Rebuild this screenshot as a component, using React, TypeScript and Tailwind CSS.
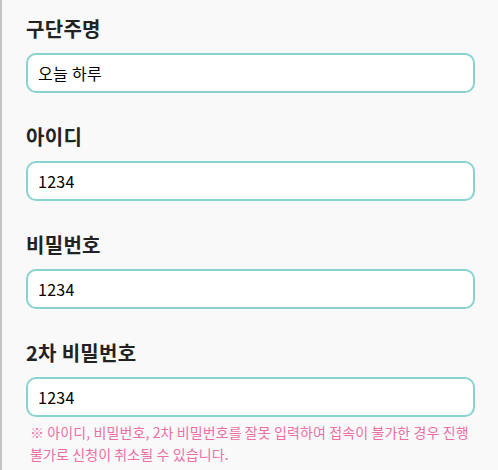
import React from 'react';

const FIELDS = [
  { label: '구단주명', value: '오늘 하루' },
  { label: '아이디', value: '1234' },
  { label: '비밀번호', value: '1234' },
  { label: '2차 비밀번호', value: '1234' },
];

export default function App() {
  return (
    <div
      className="min-h-[470px] w-[498px] bg-[#f9f9f9] border-l-2 border-[#c4c4c4] pl-[24px] pr-[23px] pt-[15px]"
      style={{ fontFamily: '"Noto Sans CJK KR", "Noto Sans", sans-serif' }}
    >
      {FIELDS.map((f, i) => (
        <div key={i} className={i === 0 ? '' : 'mt-[30px]'}>
          <h3 className="text-[20px] leading-[28px] font-bold text-[#222] tracking-[0.3px]">{f.label}</h3>
          <div className="mt-[10px] h-[40px] rounded-[10px] border-2 border-[#88d3ce] bg-white flex items-center px-[10px]">
            <span className="text-[16px] text-black tracking-[0.3px]">{f.value}</span>
          </div>
        </div>
      ))}
      <p className="mt-[4px] pl-[4px] text-[14px] leading-[22px] tracking-[0.1px] text-[#ec6fa4]">
        ※ 아이디, 비밀번호, 2차 비밀번호를 잘못 입력하여 접속이 불가한 경우 진행 불가로 신청이 취소될 수 있습니다.
      </p>
    </div>
  );
}
